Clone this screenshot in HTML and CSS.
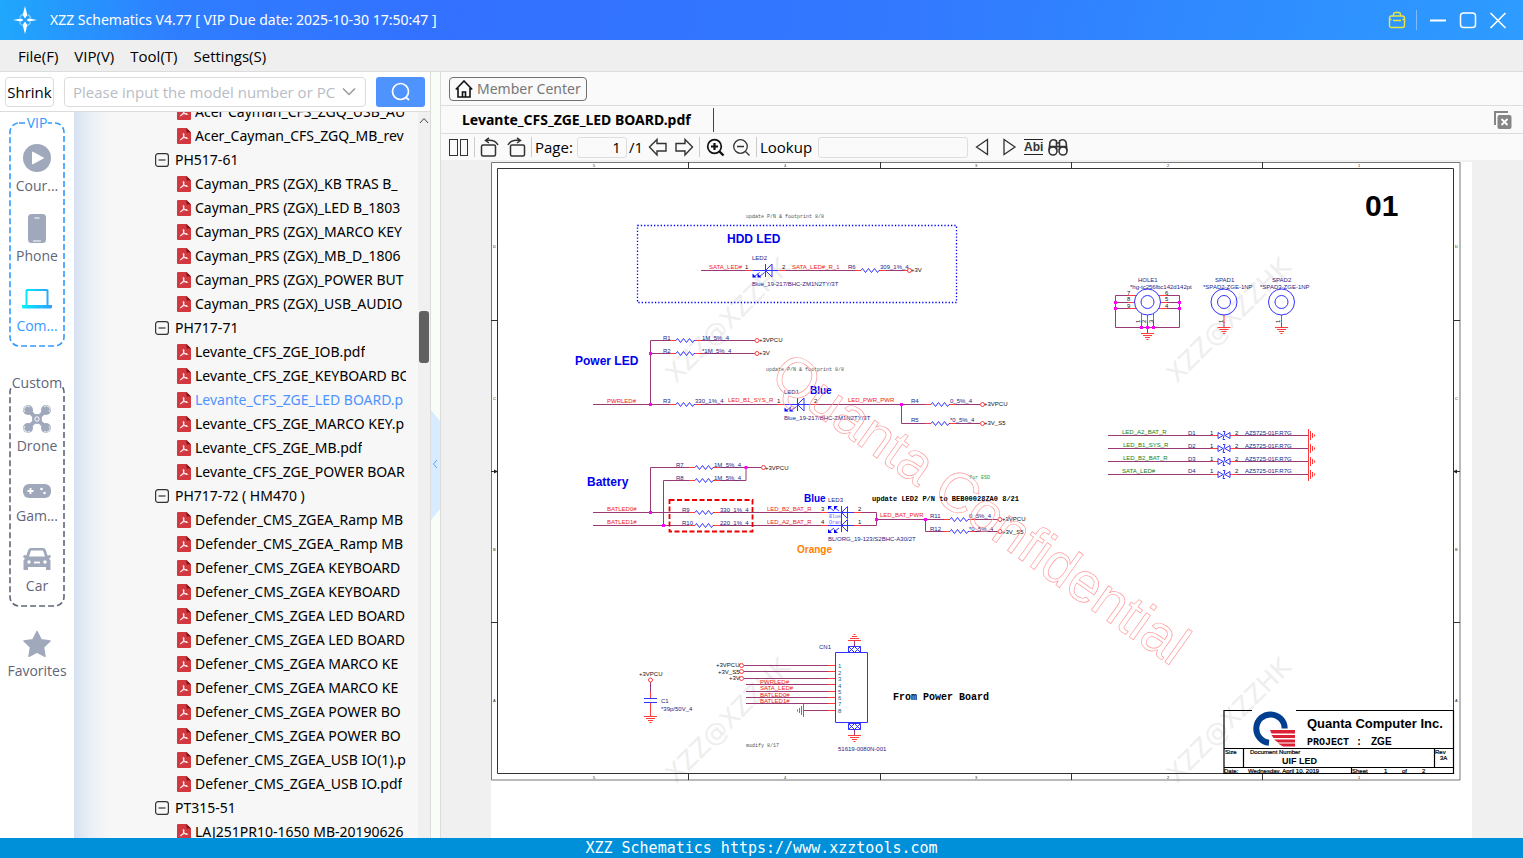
FILE: index.html
```html
<!DOCTYPE html>
<html lang="en">
<head>
<meta charset="utf-8">
<title>XZZ Schematics</title>
<link rel="stylesheet" href="styles.css">
</head>
<body>
<svg class="defs" aria-hidden="true">
  <defs>
    <linearGradient id="lap" x1="0" x2="1"><stop offset="0" stop-color="#00f0ff"/><stop offset="1" stop-color="#2f9dff"/></linearGradient>
    <symbol id="pdf" viewBox="0 0 14 16">
      <path d="M1 0H9.500L14 4.500V15a1 1 0 0 1-1 1H1a1 1 0 0 1-1-1V1a1 1 0 0 1 1-1z" fill="#d2383f"/>
      <path d="M9.500 0L14 4.500H10.500a1 1 0 0 1-1-1z" fill="#8e1118"/>
      <path d="M6.500 5.500c1.200 0 .2 3-1 4.900-.7 1.100-1.600 1.900-2 1.500-.5-.6 1.500-1.700 3.500-2.100 1.600-.3 3.600-.3 3.600.4 0 .8-2.200.2-3.300-1.200C6.300 7.800 5.800 5.500 6.500 5.500z" fill="none" stroke="#fff" stroke-width="1"/>
    </symbol>
    <symbol id="fold" viewBox="0 0 14 14">
      <rect x=".6" y=".6" width="12.800" height="12.800" rx="2.500" fill="none" stroke="#333" stroke-width="1.200"/>
      <path d="M3.500 7h7" stroke="#333" stroke-width="1.200"/>
    </symbol>
    <path id="res" d="M0 0l1.500-2 3 4 3-4 3 4 3-4 3 4 1.500-2h1" class="b"/>
    <g id="resw"><path class="r" d="M-6 0h6M19 0h6"/><use href="#res"/></g>
    <path id="gnd" class="r" d="M-6.500 0h13M-4.500 2h9M-2.500 4h5M-1 6h2"/>
    <g id="led"><path class="r" d="M-7 0h7M26 0h7"/><path class="b" d="M0 0h26M13-6.500v13M13 0l6.500-6.500v13z"/>
      <path class="b" d="M7 2L2 6M12 2L7 6"/><path d="M0 7V3l4 4zM5 7V3l4 4z" fill="#00f"/></g>
    <g id="tvs"><path class="r" d="M-7 0h7M12 0h7"/><path class="b" d="M0-3v6l5-3zM12-3v6l-5-3zM7-4L5 4M5-4h2M5 4h2"/></g>
    <circle id="term" r="2" class="r"/>
    <rect id="dot" x="-1.500" y="-1.500" width="3" height="3" fill="#f0f"/>
  </defs>
</svg>

<header class="titlebar">
  <svg class="logo" viewBox="0 0 24 28"><circle cx="12" cy="14" r="6" fill="none" stroke="#8fd4ff" stroke-width="1.200" stroke-dasharray="5 4.400" stroke-dashoffset="-2.200"/><path d="M12 0l2.300 9L12 12.500 9.700 9zM12 28l2.300-9L12 15.500 9.700 19zM0 14l8-1.600 2.500 1.600L8 15.600zM24 14l-8-1.600-2.500 1.600 2.500 1.600z" fill="#fff"/></svg>
  <h1 class="title">XZZ Schematics V4.77 [ VIP Due date: 2025-10-30 17:50:47 ]</h1>
  <div class="win">
    <button class="wbtn" aria-label="VIP"><svg width="18" height="18" viewBox="0 0 18 18" fill="none" stroke="#e8e545" stroke-width="1.400"><rect x="1.500" y="5" width="15" height="11.500" rx="2"/><path d="M5.500 5V3.500a2 2 0 0 1 2-2h3a2 2 0 0 1 2 2V5M1.500 8.500h2M14.500 8.500h2M5 9.500h8"/></svg></button>
    <span class="wsep"></span>
    <button class="wbtn" aria-label="Minimize"><svg width="18" height="18"><path d="M1 9.500h16" stroke="#fff" stroke-width="2"/></svg></button>
    <button class="wbtn" aria-label="Maximize"><svg width="18" height="18"><rect x="1.500" y="2" width="15" height="14.500" rx="3" fill="none" stroke="#fff" stroke-width="1.500"/></svg></button>
    <button class="wbtn" aria-label="Close"><svg width="18" height="18"><path d="M1.500 2l15 15M16.500 2l-15 15" stroke="#fff" stroke-width="1.600"/></svg></button>
  </div>
</header>

<nav class="menubar">
  <button class="menu">File(F)</button><button class="menu">VIP(V)</button><button class="menu">Tool(T)</button><button class="menu">Settings(S)</button>
</nav>

<main class="body">
  <section class="left">
    <form class="search">
      <button type="button" class="shrink">Shrink</button>
      <div class="combo">
        <input type="text" class="query" aria-label="Model number" placeholder="Please input the model number or PCB">
        <svg class="chev" width="14" height="9"><path d="M1 1.500l6 6 6-6" fill="none" stroke="#9a9a9a" stroke-width="1.500"/></svg>
      </div>
      <button type="button" class="go" aria-label="Search"><svg width="20" height="20" viewBox="0 0 20 20" fill="none" stroke="#fff" stroke-width="1.700"><circle cx="9.500" cy="9.500" r="8"/><path d="M15 15.500l3 2.500"/></svg></button>
    </form>
    <div class="cols">
      <aside class="side">
        <div class="group vip">
          <svg class="dash"><rect x="1" y="1" rx="9"/></svg>
          <span class="legend">VIP</span>
          <button class="item"><svg class="ico" width="30" height="30"><circle cx="15" cy="15" r="14" fill="#a0a8bc"/><path d="M10.500 9v12l11-6z" fill="#fff" stroke="#fff" stroke-linejoin="round"/></svg>Cour...</button>
          <button class="item"><svg class="ico" width="30" height="30"><rect x="6" y="1" width="18" height="29" rx="3.500" fill="#a0a8bc"/><path d="M12.500 5h5M11 28h8" stroke="#fff" stroke-width="1.200"/></svg>Phone</button>
          <button class="item on"><svg class="ico" width="30" height="30"><path d="M5 6h20a1.500 1.500 0 0 1 1.500 1.500V22H30v2a1.500 1.500 0 0 1-1.500 1.500h-27A1.500 1.500 0 0 1 0 24v-2h3.500V7.500A1.500 1.500 0 0 1 5 6zM5.500 8v14h19V8z" fill="url(#lap)" fill-rule="evenodd"/></svg>Com...</button>
        </div>
        <div class="group custom">
          <svg class="dash"><rect x="1" y="1" rx="9"/></svg>
          <span class="legend">Custom</span>
          <button class="item"><svg class="ico" width="30" height="30" fill="#a0a8bc"><circle cx="6" cy="7" r="5"/><circle cx="24" cy="7" r="5"/><circle cx="6" cy="25" r="5"/><circle cx="24" cy="25" r="5"/><path d="M7 8l8 8-8 8M23 8l-8 8 8 8" fill="none" stroke="#a0a8bc" stroke-width="4"/><circle cx="15" cy="16" r="5"/><g fill="none" stroke="#fff"><circle cx="15" cy="16" r="2.200"/><path d="M3 9a3.500 3.500 0 0 1 5-5M27 9a3.500 3.500 0 0 0-5-5M3 23a3.500 3.500 0 0 0 5 5M27 23a3.500 3.500 0 0 1-5 5" stroke-width=".8"/></g></svg>Drone</button>
          <button class="item"><svg class="ico" width="30" height="30"><rect x="1" y="11" width="28" height="14" rx="6" fill="#a0a8bc"/><path d="M5.500 18h6M8.500 15v6" stroke="#fff" stroke-width="1.800"/><circle cx="19.500" cy="16" r="1.300" fill="#fff"/><circle cx="22.500" cy="20" r="1.300" fill="#fff"/></svg>Gam...</button>
          <button class="item"><svg class="ico" width="30" height="30"><path d="M9 5h12a3 3 0 0 1 2.800 2l1.800 5.500 2.400-.5 1 2-2 1.500 1.500 2V27h-4.500v-3h-18v3H1.500v-9.500l1.500-2L1 14l1-2 2.400.5L6.200 7A3 3 0 0 1 9 5zM9 7.500L7 13.500h16L21 7.500z" fill="#a0a8bc" fill-rule="evenodd"/><path d="M12 19.500h6" stroke="#fff" stroke-width="1.800"/><circle cx="7" cy="19" r="1.700" fill="#fff"/><circle cx="23" cy="19" r="1.700" fill="#fff"/></svg>Car</button>
        </div>
        <button class="item fav"><svg class="ico" width="30" height="30"><path d="M15 3.500l4 8.200 9 1.300-6.500 6.300 1.500 9L15 24l-8 4.300 1.500-9L2 13l9-1.300z" fill="#a0a8bc" stroke="#a0a8bc" stroke-width="1.500" stroke-linejoin="round"/></svg>Favorites</button>
      </aside>
      <ul class="tree">
        <li class="file"><svg class="fi"><use href="#pdf"/></svg><span>Acer Cayman_CFS_ZGQ_USB_AU</span></li>
        <li class="file"><svg class="fi"><use href="#pdf"/></svg><span>Acer_Cayman_CFS_ZGQ_MB_rev</span></li>
        <li class="dir"><svg class="di"><use href="#fold"/></svg><span>PH517-61</span></li>
        <li class="file"><svg class="fi"><use href="#pdf"/></svg><span>Cayman_PRS (ZGX)_KB TRAS B_</span></li>
        <li class="file"><svg class="fi"><use href="#pdf"/></svg><span>Cayman_PRS (ZGX)_LED B_1803</span></li>
        <li class="file"><svg class="fi"><use href="#pdf"/></svg><span>Cayman_PRS (ZGX)_MARCO KEY</span></li>
        <li class="file"><svg class="fi"><use href="#pdf"/></svg><span>Cayman_PRS (ZGX)_MB_D_1806</span></li>
        <li class="file"><svg class="fi"><use href="#pdf"/></svg><span>Cayman_PRS (ZGX)_POWER BUT</span></li>
        <li class="file"><svg class="fi"><use href="#pdf"/></svg><span>Cayman_PRS (ZGX)_USB_AUDIO</span></li>
        <li class="dir"><svg class="di"><use href="#fold"/></svg><span>PH717-71</span></li>
        <li class="file"><svg class="fi"><use href="#pdf"/></svg><span>Levante_CFS_ZGE_IOB.pdf</span></li>
        <li class="file"><svg class="fi"><use href="#pdf"/></svg><span>Levante_CFS_ZGE_KEYBOARD BO</span></li>
        <li class="file sel"><svg class="fi"><use href="#pdf"/></svg><span>Levante_CFS_ZGE_LED BOARD.p</span></li>
        <li class="file"><svg class="fi"><use href="#pdf"/></svg><span>Levante_CFS_ZGE_MARCO KEY.p</span></li>
        <li class="file"><svg class="fi"><use href="#pdf"/></svg><span>Levante_CFS_ZGE_MB.pdf</span></li>
        <li class="file"><svg class="fi"><use href="#pdf"/></svg><span>Levante_CFS_ZGE_POWER BOAR</span></li>
        <li class="dir"><svg class="di"><use href="#fold"/></svg><span>PH717-72 ( HM470 )</span></li>
        <li class="file"><svg class="fi"><use href="#pdf"/></svg><span>Defender_CMS_ZGEA_Ramp MB</span></li>
        <li class="file"><svg class="fi"><use href="#pdf"/></svg><span>Defender_CMS_ZGEA_Ramp MB</span></li>
        <li class="file"><svg class="fi"><use href="#pdf"/></svg><span>Defener_CMS_ZGEA KEYBOARD</span></li>
        <li class="file"><svg class="fi"><use href="#pdf"/></svg><span>Defener_CMS_ZGEA KEYBOARD</span></li>
        <li class="file"><svg class="fi"><use href="#pdf"/></svg><span>Defener_CMS_ZGEA LED BOARD</span></li>
        <li class="file"><svg class="fi"><use href="#pdf"/></svg><span>Defener_CMS_ZGEA LED BOARD</span></li>
        <li class="file"><svg class="fi"><use href="#pdf"/></svg><span>Defener_CMS_ZGEA MARCO KE</span></li>
        <li class="file"><svg class="fi"><use href="#pdf"/></svg><span>Defener_CMS_ZGEA MARCO KE</span></li>
        <li class="file"><svg class="fi"><use href="#pdf"/></svg><span>Defener_CMS_ZGEA POWER BO</span></li>
        <li class="file"><svg class="fi"><use href="#pdf"/></svg><span>Defener_CMS_ZGEA POWER BO</span></li>
        <li class="file"><svg class="fi"><use href="#pdf"/></svg><span>Defener_CMS_ZGEA_USB IO(1).p</span></li>
        <li class="file"><svg class="fi"><use href="#pdf"/></svg><span>Defener_CMS_ZGEA_USB IO.pdf</span></li>
        <li class="dir"><svg class="di"><use href="#fold"/></svg><span>PT315-51</span></li>
        <li class="file"><svg class="fi"><use href="#pdf"/></svg><span>LAJ251PR10-1650 MB-20190626</span></li>
      </ul>
      <div class="scroll"><svg width="12" height="18"><path d="M2 11l4-4.500 4 4.500" fill="none" stroke="#444"/></svg><span class="thumb"></span></div>
    </div>
  </section>

  <div class="split"><svg class="grip" width="9" height="110"><path d="M0 0l9 11v88l-9 11z" fill="#d9ecff"/><path d="M6 50l-3.500 4L6 58" fill="none" stroke="#5b9bff"/></svg></div>

  <section class="right">
    <div class="memberrow">
      <button class="member"><svg width="18" height="18" viewBox="0 0 18 18" fill="none" stroke="#111" stroke-width="1.600"><path d="M.8 9.500L9 1l8.200 8.500M3 8v9h12V8M7.500 17v-5h3v5"/></svg>Member Center</button>
    </div>
    <div class="tabs">
      <button class="tab">Levante_CFS_ZGE_LED BOARD.pdf</button>
      <button class="tool closeall" aria-label="Close all"><svg width="20" height="20"><path d="M2 15V2h13" fill="none" stroke="#858585" stroke-width="2"/><rect x="4.500" y="5" width="14" height="14" rx="2" fill="#858585"/><path d="M8.500 9l6 6M14.500 9l-6 6" stroke="#fff" stroke-width="1.800"/></svg></button>
    </div>
    <div class="toolbar">
      <button class="tool" aria-label="Two pages"><svg width="20" height="20" fill="none" stroke="#333"><rect x=".5" y="2.500" width="8" height="16"/><rect x="11.500" y="2.500" width="7" height="16"/></svg></button>
      <span class="tsep"></span>
      <button class="tool" aria-label="Rotate left"><svg width="20" height="20" fill="none" stroke="#333" stroke-width="1.500"><rect x="1.500" y="8" width="14" height="11" rx="1.500"/><path d="M6 3.500c5-.8 10 .5 12 4.500M9 .8L5.500 3.500 9 6"/></svg></button>
      <button class="tool" aria-label="Rotate right"><svg width="20" height="20" fill="none" stroke="#333" stroke-width="1.500"><rect x="4.500" y="8" width="14" height="11" rx="1.500"/><path d="M14 3.500C9 2.700 4 4 2 8M11 .8l3.500 2.700L11 6"/></svg></button>
      <span class="tsep"></span>
      <label for="page">Page:</label>
      <span class="pg"><input id="page" class="box num" type="text" value="1"><span>/1</span></span>
      <button class="tool" aria-label="Previous page"><svg width="20" height="20" fill="none" stroke="#333" stroke-width="1.400"><path d="M1.500 10L9 2.500v4h9v7.500H9v4z"/></svg></button>
      <button class="tool" aria-label="Next page"><svg width="20" height="20" fill="none" stroke="#333" stroke-width="1.400"><path d="M18.500 10L11 2.500v4H2v7.500h9v4z"/></svg></button>
      <span class="tsep"></span>
      <button class="tool" aria-label="Zoom in"><svg width="20" height="20" fill="none" stroke="#111" stroke-width="1.700"><circle cx="9.500" cy="9.500" r="6.800"/><path d="M14.500 14.500l4 4" stroke-width="2.400"/><path d="M6 9.500h7M9.500 6v7" stroke-width="2.200"/></svg></button>
      <button class="tool" aria-label="Zoom out"><svg width="20" height="20" fill="none" stroke="#333" stroke-width="1.300"><circle cx="9.500" cy="9.500" r="6.800"/><path d="M14.500 14.500l4 4M6 9.500h7"/></svg></button>
      <span class="tsep"></span>
      <label for="look">Lookup</label>
      <input id="look" class="box find" type="text">
      <button class="tool" aria-label="Find previous"><svg width="20" height="20" fill="none" stroke="#333" stroke-width="1.300"><path d="M3.500 10L14.500 2.500v15z"/></svg></button>
      <button class="tool" aria-label="Find next"><svg width="20" height="20" fill="none" stroke="#333" stroke-width="1.300"><path d="M16 10L5 2.500v15z"/></svg></button>
      <button class="tool abi">Abi</button>
      <button class="tool" aria-label="Find in files"><svg width="20" height="20" fill="none" stroke="#333" stroke-width="1.600"><circle cx="5" cy="14" r="4"/><circle cx="15" cy="14" r="4"/><path d="M1 13.500L2 5q2.500-4 6.500-1v9M19 13.500L18 5q-2.500-4-6.500-1v9M2 9.500h16M8.500 6h3"/></svg></button>
    </div>
    <div class="viewer">
      <svg class="sheet" viewBox="491 162 981 676" role="img" aria-label="LED board schematic">
        <rect x="491" y="162" width="981" height="676" fill="#fff"/>
        <g class="wm">
          <text transform="translate(676 384) rotate(-45)">XZZ@XZZHK</text>
          <text transform="translate(1177 384) rotate(-45)">XZZ@XZZHK</text>
          <text transform="translate(676 784) rotate(-45)">XZZ@XZZHK</text>
          <text transform="translate(1177 784) rotate(-45)">XZZ@XZZHK</text>
        </g>
        <g class="k">
          <path d="M491.500 162.500h968.500v617.500h-968.500z" stroke="#777"/><path d="M497.500 168.500h956v605h-956z"/>
          <path d="M688.500 162v6M880.500 162v6M1071.500 162v6M1262.500 162v6M688.500 774v6M880.500 774v6M1071.500 774v6M1262.500 774v6M491 320.500h6M491 622.500h6M1454 320.500h6M1454 622.500h6M491 471.500h6M1454 471.500h6"/>
          <path d="M498 471.500l-4-2v4zM1453 471.500l4-2v4z" fill="#222" stroke="none"/>
        </g>
        <g class="t4">
          <text x="593" y="167">5</text><text x="784" y="167">4</text><text x="975" y="167">3</text><text x="1167" y="167">2</text><text x="1358" y="167">1</text>
          <text x="593" y="779">5</text><text x="784" y="779">4</text><text x="975" y="779">3</text><text x="1167" y="779">2</text><text x="1358" y="779">1</text>
          <text x="493" y="248">D</text><text x="493" y="400">C</text><text x="493" y="551">B</text><text x="493" y="702">A</text>
          <text x="1455" y="248">D</text><text x="1455" y="400">C</text><text x="1455" y="551">B</text><text x="1455" y="702">A</text>
        </g>
        <text class="h30" x="1365" y="216">01</text>

        <!-- HDD LED -->
        <text class="cr" x="746" y="218">update P/N &amp; footprint 8/8</text>
        <rect x="637.500" y="225.500" width="319" height="77" fill="none" stroke="#00f" stroke-width="1.300" stroke-dasharray="1.300 2"/>
        <text class="h12" x="727" y="243">HDD LED</text>
        <path class="w" d="M701 270.500h45M785 270.500h70M886 270.500h18"/><path class="r" d="M904 270.500h4"/>
        <use href="#led" x="752.500" y="270.500"/><use href="#resw" x="861" y="270.500"/><use href="#term" x="909.500" y="270.500"/>
        <g class="tn"><text x="752" y="260">LED2</text><text x="752" y="286">Blue_19-217/BHC-ZM1N2TY/3T</text><text x="848" y="269">R6</text><text x="880" y="269">309_1%_4</text></g>
        <g class="tr"><text x="709" y="269">SATA_LED#</text><text x="792" y="269">SATA_LED#_R_1</text></g>
        <g class="tk"><text x="745" y="269">1</text><text x="782" y="269">2</text><text x="911" y="272">+3V</text></g>

        <!-- Power LED -->
        <text class="h12" x="575" y="365">Power LED</text>
        <path class="w" d="M670 340.500h-19.500V404.500M650.500 353.500h19.500M701 340.500h54M701 353.500h54M593 404.500h77M701 404.500h77M817 404.500h108M901.500 404.500v19h23.500M956 404.500h24M956 423.500h24"/>
        <use href="#resw" x="676" y="340.500"/><use href="#resw" x="676" y="353.500"/><use href="#resw" x="676" y="404.500"/><use href="#resw" x="931" y="404.500"/><use href="#resw" x="931" y="423.500"/>
        <use href="#led" x="784.500" y="404.500"/>
        <use href="#term" x="757" y="340.500"/><use href="#term" x="757" y="353.500"/><use href="#term" x="982.500" y="404.500"/><use href="#term" x="982.500" y="423.500"/>
        <use href="#dot" x="650.500" y="353.500"/><use href="#dot" x="650.500" y="404.500"/><use href="#dot" x="901.500" y="404.500"/>
        <g class="tn"><text x="663" y="340">R1</text><text x="663" y="353">R2</text><text x="663" y="403">R3</text><text x="702" y="340">1M_5%_4</text><text x="702" y="353">*1M_5%_4</text><text x="695" y="403">330_1%_4</text><text x="784" y="394">LED1</text><text x="784" y="420">Blue_19-217/BHC-ZM1N2TY/3T</text><text x="911" y="403">R4</text><text x="911" y="422">R5</text><text x="950" y="403">0_5%_4</text><text x="950" y="422">*0_5%_4</text></g>
        <g class="tr"><text x="607" y="403">PWRLED#</text><text x="728" y="402">LED_B1_SYS_R</text><text x="848" y="402">LED_PWR_PWR</text></g>
        <g class="tk"><text x="759" y="342">+3VPCU</text><text x="759" y="355">+3V</text><text x="777" y="403">1</text><text x="814" y="403">2</text><text x="984" y="406">+3VPCU</text><text x="984" y="425">+3V_S5</text></g>
        <text class="cr" x="766" y="371">update P/N &amp; footprint 8/8</text>
        <text class="h10" x="810" y="394">Blue</text>

        <!-- Battery -->
        <text class="h12" x="587" y="486">Battery</text>
        <path class="w" d="M689 467.500h-38.500V512.500M689 480.500h-25.500V525.500M720 467.500h41M720 480.500h26v-13M593 512.500h96M593 525.500h96M720 512.500h102M720 525.500h102M860 512.500h16.500v13h-16.500M876.500 519.500h67.500M925.500 519.500v12h18.500M975 519.500h23M975 531.500h23"/>
        <use href="#resw" x="695" y="467.500"/><use href="#resw" x="695" y="480.500"/><use href="#resw" x="695" y="512.500"/><use href="#resw" x="695" y="525.500"/><use href="#resw" x="950" y="519.500"/><use href="#resw" x="950" y="531.500"/>
        <use href="#term" x="763.500" y="467.500"/><use href="#term" x="1000" y="519.500"/><use href="#term" x="1000" y="531.500"/>
        <path class="r" d="M821 512.500h7M821 525.500h7M854 512.500h7M854 525.500h7"/>
        <path class="b" d="M828 512.500h26M828 525.500h26M841.500 506v26M841.500 512.500l6-6v12zM841.500 525.500l6-6v12zM829 507l5 4M834 507l5 4M829 532l5-4M834 532l5-4"/>
        <path d="M828 510v-4h4zM834 510v-4h4zM828 529v4h4zM834 529v4h4z" fill="#00f"/>
        <g class="tiny"><text x="829" y="518">Blue</text><text x="829" y="524">Oran</text></g>
        <rect x="669.500" y="500" width="83" height="31.500" fill="none" stroke="#e00" stroke-width="1.800" stroke-dasharray="5 2.500"/>
        <use href="#dot" x="746" y="467.500"/><use href="#dot" x="650.500" y="512.500"/><use href="#dot" x="663.500" y="525.500"/><use href="#dot" x="876.500" y="519.500"/><use href="#dot" x="925.500" y="519.500"/>
        <g class="tn"><text x="676" y="467">R7</text><text x="676" y="480">R8</text><text x="714" y="467">1M_5%_4</text><text x="714" y="480">1M_5%_4</text><text x="682" y="512">R9</text><text x="682" y="525">R10</text><text x="720" y="512">330_1%_4</text><text x="720" y="525">220_1%_4</text><text x="828" y="502">LED3</text><text x="828" y="541">BL/ORG_19-123/S2BHC-A30/2T</text><text x="930" y="518">R11</text><text x="930" y="531">R12</text><text x="969" y="518">0_5%_4</text><text x="969" y="531">*0_5%_4</text></g>
        <g class="tr"><text x="607" y="511">BATLED0#</text><text x="607" y="524">BATLED1#</text><text x="767" y="511">LED_B2_BAT_R</text><text x="767" y="524">LED_A2_BAT_R</text><text x="880" y="517">LED_BAT_PWR</text></g>
        <g class="tk"><text x="765" y="470">+3VPCU</text><text x="821" y="511">3</text><text x="821" y="524">4</text><text x="858" y="511">2</text><text x="858" y="524">1</text><text x="1002" y="521">+3VPCU</text><text x="1002" y="534">+3V_S5</text></g>
        <text class="h10" x="804" y="502">Blue</text><text class="h10 or" x="797" y="553">Orange</text>
        <text class="cb7" x="872" y="501">update LED2 P/N to BEB00028ZA0 8/21</text>
        <text class="cr gr" x="969" y="479">for ESD</text>

        <!-- Connector and capacitor -->
        <path class="w" d="M650.500 682v12M650.500 706v4M744 665.500h84M744 671.500h84M744 678.500h84M746 684.500h82M746 691.500h82M746 697.500h82M746 703.500h82M804 710.500h24M854.500 640v6M854.500 729v7"/>
        <path class="r" d="M650.500 692v6M650.500 703v13M828 665.500h7M828 671.500h7M828 678.500h7M828 684.500h7M828 691.500h7M828 697.500h7M828 703.500h7M828 710.500h7M803.500 704v13M801.500 706v9M799.500 708v5M797.500 709.500v2"/>
        <path class="b" d="M644 698.500h13M644 702.500h13M835.500 652.500h32v70h-32zM848.500 646.500h12v6h-12zM848.500 723.500h12v6h-12zM848.500 646.500l6 6 6-6M848.500 652.500l6-6 6 6M848.500 723.500l6 6 6-6M848.500 729.500l6-6 6 6"/>
        <use href="#term" x="650.500" y="680"/><use href="#term" x="741.500" y="665.500"/><use href="#term" x="741.500" y="671.500"/><use href="#term" x="741.500" y="678.500"/>
        <use href="#gnd" x="650.500" y="716.500"/><use href="#gnd" x="854.500" y="735.500"/><use href="#gnd" transform="translate(854.500 640.500) scale(1 -1)"/>
        <g class="tk"><text x="639" y="676">+3VPCU</text><text x="716" y="667">+3VPCU</text><text x="718" y="674">+3V_S5</text><text x="729" y="680">+3V</text></g>
        <g class="tn"><text x="661" y="703">C1</text><text x="661" y="711">*39p/50V_4</text><text x="819" y="649">CN1</text><text x="838" y="751">51619-0080N-001</text></g>
        <g class="tr"><text x="760" y="684">PWRLED#</text><text x="760" y="690">SATA_LED#</text><text x="760" y="697">BATLED0#</text><text x="760" y="703">BATLED1#</text></g>
        <g class="tp"><text x="838" y="668">1</text><text x="838" y="675">2</text><text x="838" y="681">3</text><text x="838" y="688">4</text><text x="838" y="694">5</text><text x="838" y="700">6</text><text x="838" y="706">7</text><text x="838" y="713">8</text></g>
        <text class="cr" x="746" y="747">modify 8/17</text>
        <text class="cb10" x="893" y="700">From Power Board</text>

        <!-- Holes and pads -->
        <path class="w" d="M1129 295.500h-13.500v32h64v-32h-13.500M1115.500 302.500h13M1115.500 308.500h13M1166 302.500h13M1166 308.500h13M1141.500 320v7M1147.500 320v14M1153.500 320v7M1224 322v6M1281.500 322v6"/>
        <path class="r" d="M1128 295.500h8M1128 302.500h7M1128 308.500h8M1159 295.500h8M1160 302.500h7M1159 308.500h8M1141.500 314v7M1147.500 315v7M1153.500 314v7M1224 315v8M1281.500 315v8"/>
        <g class="b"><circle cx="1147.500" cy="302" r="13"/><circle cx="1147.500" cy="302" r="6.500"/><circle cx="1224" cy="302" r="13"/><circle cx="1224" cy="302" r="6.500"/><circle cx="1281.500" cy="302" r="13"/><circle cx="1281.500" cy="302" r="6.500"/></g>
        <use href="#dot" x="1115.500" y="302.500"/><use href="#dot" x="1115.500" y="308.500"/><use href="#dot" x="1179.500" y="302.500"/><use href="#dot" x="1179.500" y="308.500"/><use href="#dot" x="1141.500" y="327.500"/><use href="#dot" x="1147.500" y="327.500"/><use href="#dot" x="1153.500" y="327.500"/>
        <use href="#gnd" x="1147.500" y="333.500"/><use href="#gnd" x="1224" y="327.500"/><use href="#gnd" x="1281.500" y="327.500"/>
        <g class="tn"><text x="1138" y="282">HOLE1</text><text x="1130" y="289">*hg-tc256lbc142d142pt</text><text x="1215" y="282">SPAD1</text><text x="1203" y="289">*SPAD2-ZGE-1NP</text><text x="1272" y="282">SPAD2</text><text x="1260" y="289">*SPAD3-ZGE-1NP</text></g>
        <g class="tk"><text x="1127" y="295">7</text><text x="1127" y="301">8</text><text x="1127" y="308">9</text><text x="1165" y="295">6</text><text x="1165" y="301">5</text><text x="1165" y="308">4</text>
        <text transform="translate(1140 323) rotate(-90)">1</text><text transform="translate(1146 323) rotate(-90)">2</text><text transform="translate(1153 323) rotate(-90)">3</text><text transform="translate(1223 323) rotate(-90)">1</text><text transform="translate(1280 323) rotate(-90)">1</text></g>

        <!-- ESD diodes -->
        <path class="w" d="M1108 435.500h104M1236 435.500h72M1108 448.500h104M1236 448.500h72M1108 461.500h104M1236 461.500h72M1108 474.500h104M1236 474.500h72"/>
        <use href="#tvs" x="1218" y="435.500"/><use href="#tvs" x="1218" y="448.500"/><use href="#tvs" x="1218" y="461.500"/><use href="#tvs" x="1218" y="474.500"/>
        <use href="#gnd" transform="translate(1308.500 435.500) rotate(-90)"/><use href="#gnd" transform="translate(1308.500 448.500) rotate(-90)"/><use href="#gnd" transform="translate(1308.500 461.500) rotate(-90)"/><use href="#gnd" transform="translate(1308.500 474.500) rotate(-90)"/>
        <g class="tg"><text x="1122" y="434">LED_A2_BAT_R</text><text x="1123" y="447">LED_B1_SYS_R</text><text x="1123" y="460">LED_B2_BAT_R</text><text x="1122" y="473">SATA_LED#</text></g>
        <g class="tn"><text x="1188" y="435">D1</text><text x="1188" y="448">D2</text><text x="1188" y="461">D3</text><text x="1188" y="473">D4</text><text x="1245" y="435">AZ5725-01F.R7G</text><text x="1245" y="448">AZ5725-01F.R7G</text><text x="1245" y="461">AZ5725-01F.R7G</text><text x="1245" y="473">AZ5725-01F.R7G</text></g>
        <g class="tk"><text x="1210" y="435">1</text><text x="1210" y="448">1</text><text x="1210" y="461">1</text><text x="1210" y="473">1</text><text x="1235" y="435">2</text><text x="1235" y="448">2</text><text x="1235" y="461">2</text><text x="1235" y="473">2</text></g>

        <text class="conf" transform="translate(768 381) rotate(35.300)">Quanta Confidential</text>

        <!-- Title block -->
        <path d="M1252 710.500h-28v63h229.500v-63h-157.500M1224 748.500h229M1224 767.500h229M1243.500 748v19M1434.500 748v19M1351.500 768v5" fill="none" stroke="#000" stroke-width="1.200"/>
        <path d="M1269 742.700A14.200 14.200 0 1 1 1284.700 728.500" fill="none" stroke="#003f8f" stroke-width="6"/>
        <path d="M1270 730h25v3.500h-23.500zM1271.500 735h23.500v3h-21.500zM1274 739.500h21v3h-17zM1278 743.500h17v3h-12z" fill="#dc2035"/>
        <text class="q13" x="1307" y="728">Quanta Computer Inc.</text>
        <text class="cb10" x="1307" y="745">PROJECT</text><text class="cb10" x="1356" y="745">:</text><text class="q10" x="1371" y="745">ZGE</text>
        <text class="q9" x="1282" y="764">UIF LED</text>
        <g class="ts"><text x="1225" y="754">Size</text><text x="1250" y="754">Document Number</text><text x="1435" y="754">Rev</text><text x="1440" y="760">3A</text><text x="1224" y="773">Date:</text><text x="1248" y="773">Wednesday, April 10, 2019</text><text x="1352" y="773">Sheet</text><text x="1384" y="773">1</text><text x="1402" y="773">of</text><text x="1422" y="773">2</text></g>
      </svg>
    </div>
  </section>
</main>
<footer class="status">XZZ Schematics https://www.xzztools.com</footer>
</body>
</html>
```
FILE: styles.css
```css
* { box-sizing: border-box; }
body {
  margin: 0;
  height: 100vh;
  display: flex;
  flex-direction: column;
  overflow: hidden;
  font: 15px/20px "Open Sans", "Noto Sans", sans-serif;
  color: #000;
}
button, input { font: inherit; color: inherit; }
button { background: none; border: 0; padding: 0; }
svg { display: block; flex: none; }
.defs { position: absolute; width: 0; height: 0; }

.titlebar {
  flex: none;
  height: 40px;
  display: flex;
  align-items: center;
  padding: 0 16px 0 13px;
  background: linear-gradient(100deg, #1fa8fc 0, #2f7dff 12%, #3370ff 30%, #3279ff 60%, #2d9cff 100%);
}
.logo { width: 24px; height: 28px; }
.title, .tree, .member, .tab { font-family: "Noto Sans", "Open Sans", sans-serif; font-size: 14px; }
.title { margin: 0 auto 0 13px; font-weight: 400; color: #fff; }
.win { display: flex; align-items: center; gap: 12px; }
.wbtn { width: 18px; height: 18px; }
.wbtn:first-child { margin-right: -2px; }
.wsep { width: 1px; height: 20px; background: #7cbcff; }

.menubar {
  flex: none;
  height: 32px;
  display: flex;
  align-items: center;
  gap: 16px;
  padding-left: 18px;
  background: #efefef;
  border-bottom: 1px solid #dcdcdc;
}

.body { flex: 1; min-height: 0; display: flex; }
.left { flex: none; width: 431px; display: flex; flex-direction: column; border-right: 1px solid #dcdcdc; background: #fff; }
.search { flex: none; height: 40px; margin: 0; display: flex; align-items: center; padding: 0 5px; border-bottom: 1px solid #dcdcdc; }
.shrink { width: 49px; height: 30px; border: 1px solid #dcdcdc; border-radius: 4px; }
.combo { flex: 1; height: 30px; margin: 0 10px; display: flex; align-items: center; padding: 0 9px 0 8px; border: 1px solid #dcdcdc; border-radius: 4px; }
.query { flex: 1; min-width: 0; padding: 0; border: 0; background: none; outline: 0; }
.query::placeholder { color: #b8bcc4; opacity: 1; }
.chev { margin-left: 6px; }
.go { width: 49px; height: 30px; display: flex; align-items: center; justify-content: center; background: #4f93ff; border-radius: 3px; }

.cols { flex: 1; min-height: 0; display: flex; }
.side { flex: none; width: 74px; padding: 10px 0 0 9px; display: flex; flex-direction: column; align-items: flex-start; color: #5f6679; }
.group { position: relative; width: 56px; height: 225px; padding-top: 21px; display: flex; flex-direction: column; gap: 14px; }
.custom { margin-top: 35px; }
.dash { position: absolute; inset: 0; width: 100%; height: 100%; }
.dash rect { width: calc(100% - 2px); height: calc(100% - 2px); fill: none; stroke: #5f6679; stroke-width: 1.6px; stroke-dasharray: 6 3; }
.vip .dash rect { stroke: #3399ff; }
.legend { position: absolute; top: -9px; left: 50%; transform: translateX(-50%); background: #fff; font-size: 14px; line-height: 20px; }
.vip .legend, .on { color: #3399ff; }
.item { width: 56px; height: 56px; display: flex; flex-direction: column; align-items: center; font-size: 14px; line-height: 26px; white-space: nowrap; }
.fav { margin-top: 21px; }

.tree { flex: 1; min-width: 0; margin: 0; padding: 0 12px 0 81px; list-style: none; overflow: hidden; background: linear-gradient(90deg, #d6e1f1 0, #eaeff6 16px, #f7f7f7 36px); }
.tree li { height: 24px; display: flex; align-items: center; gap: 6px; white-space: nowrap; line-height: 24px; }
.tree li:first-child { margin-top: -12px; }
.tree span { overflow: hidden; }
.tree .file { padding-left: 22px; gap: 4px; }
.fi { width: 14px; height: 16px; }
.di { width: 14px; height: 14px; }
.sel { color: #4f93ff; }
.scroll { flex: none; width: 12px; background: #f0f0f0; }
.thumb { display: block; width: 10px; height: 52px; margin: 181px 1px 0; border-radius: 3px; background: #606060; }

.split { flex: none; width: 10px; display: flex; align-items: center; background: #f9fdf8; border-right: 1px solid #dcdcdc; }
.grip { margin-top: 20px; }

.right { flex: 1; min-width: 0; display: flex; flex-direction: column; background: #fafafa; }
.memberrow { flex: none; height: 34px; padding: 5px 8px; border-bottom: 1px solid #dcdcdc; }
.member { height: 24px; display: flex; align-items: center; gap: 4px; padding: 0 5px; border: 1px solid #707070; border-radius: 4px; color: #777; }
.tabs { flex: none; height: 28px; display: flex; align-items: center; justify-content: space-between; padding: 0 9px 0 8px; border-bottom: 1px solid #dcdcdc; }
.tab { height: 24px; padding: 0 22px 0 13px; border-right: 1px solid #444; font-weight: 700; }
.toolbar { flex: none; height: 26px; display: flex; align-items: center; gap: 4px; padding-left: 7px; }
.tool { min-width: 22px; display: flex; align-items: center; justify-content: center; }
.tsep { width: 1px; height: 20px; background: #ccc; }
.tsep + label { margin-left: -1px; }
.box { height: 21px; border: 1px solid #dedede; border-radius: 3px; background: #fafafa; outline: 0; }
.pg { display: flex; align-items: center; gap: 2px; }
.num { width: 50px; padding: 0 5px; text-align: right; }
.find { width: 150px; margin-left: 2px; }
.abi { line-height: 14px; font-size: 12px; font-weight: 700; font-family: "Liberation Sans", sans-serif; border-top: 1px solid #222; border-bottom: 1px solid #222; color: #333; min-width: 18px; }
.viewer { flex: 1; min-height: 0; overflow: hidden; padding: 2px 51px 0 50px; background: #f0f0f0; }
.sheet { width: 100%; height: auto; font-family: "Liberation Sans", sans-serif; }

.b { fill: none; stroke: #3333ff; stroke-width: 1; }
.r { fill: none; stroke: #ff3b3b; stroke-width: 1; }
.w { fill: none; stroke: #9a3a74; stroke-width: 1; }
.k { fill: none; stroke: #333; stroke-width: 1; }
.tn, .tr, .tk, .tp, .tg, .ts { font-size: 6px; }
.tn { fill: #1c1c86; }
.tr { fill: #f01818; }
.tk { fill: #111; }
.tp { fill: #14608c; }
.tg { fill: #128012; }
.ts { fill: #000; stroke: #000; stroke-width: .2px; }
.t4 { font-size: 4px; fill: #222; }
.tiny { font: 5px "Liberation Mono", monospace; fill: #6b6bff; }
.h30 { font-size: 30px; font-weight: 700; }
.h12 { font-size: 12px; font-weight: 700; fill: #0000f0; }
.h10 { font-size: 10px; font-weight: 700; fill: #0000f0; }
.or { fill: #ff8000; }
.q13 { font-size: 13px; font-weight: 700; }
.q10 { font-size: 10px; font-weight: 700; }
.q9 { font-size: 9px; font-weight: 700; }
.cr { font: 5px "Liberation Mono", monospace; fill: #555; }
.gr { fill: #2c9a2c; }
.cb7 { font: 700 7px "Liberation Mono", monospace; }
.cb10 { font: 700 10px "Liberation Mono", monospace; }
.wm { font: 25px "DejaVu Sans", sans-serif; fill: #eeeeee; }
.conf { font-size: 56px; fill: none; stroke: #ff9c9c; stroke-width: .7px; }

.status { flex: none; height: 20px; background: #0090da; color: #fff; text-align: center; font: 15px/20px "DejaVu Sans Mono", monospace; }
```
